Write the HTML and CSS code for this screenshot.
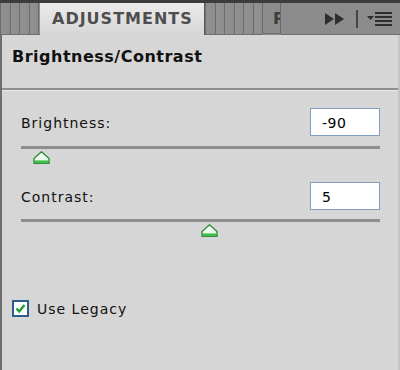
FILE: index.html
```html
<!DOCTYPE html>
<html lang="en">
<head>
    <meta charset="UTF-8">
    <meta name="viewport" content="width=device-width, initial-scale=1.0">
    <title>Adjustments</title>
    <link rel="stylesheet" href="styles.css">
</head>
<body>
    <div class="painel">
        <!-- barra de abas -->
        <div class="abas">
            <div class="grip grip-esq"></div>
            <div class="aba ativa">ADJUSTMENTS</div>
            <div class="grip grip-meio"></div>
            <div class="aba fechada">P</div>
            <div class="acoes">
                <svg class="icone-avancar" width="22" height="12" viewBox="0 0 22 12">
                    <polygon points="1,0 10,6 1,12" fill="#2e2e2e"/>
                    <polygon points="11,0 20,6 11,12" fill="#2e2e2e"/>
                </svg>
                <span class="separador"></span>
                <svg class="icone-menu" width="26" height="16" viewBox="0 0 26 16">
                    <polygon points="0,5 7,5 3.5,9" fill="#2e2e2e"/>
                    <rect x="8" y="1" width="17" height="2" fill="#2e2e2e"/>
                    <rect x="8" y="5" width="17" height="2" fill="#2e2e2e"/>
                    <rect x="8" y="9" width="17" height="2" fill="#2e2e2e"/>
                    <rect x="8" y="13" width="17" height="2" fill="#2e2e2e"/>
                </svg>
            </div>
        </div>

        <div class="conteudo">
            <h1 class="titulo">Brightness/Contrast</h1>
            <div class="divisor"></div>

            <div class="campo">
                <div class="linha">
                    <label for="brilho">Brightness:</label>
                    <input class="valor" id="brilho" type="text" value="-90">
                </div>
                <div class="trilho"></div>
                <div class="cursor-linha">
                    <svg class="cursor" style="margin-left: 12px" width="17" height="13" viewBox="0 0 17 13">
                        <defs>
                            <linearGradient id="g1" x1="0" y1="0" x2="0" y2="1">
                                <stop offset="0" stop-color="#ffffff"/>
                                <stop offset="0.7" stop-color="#e8f8e8"/>
                                <stop offset="1" stop-color="#6fd06f"/>
                            </linearGradient>
                        </defs>
                        <path d="M8.5 0.8 L16 7.5 L16 12.2 L1 12.2 L1 7.5 Z" fill="url(#g1)" stroke="#2f8f3a" stroke-width="1.4" stroke-linejoin="round"/>
                        <rect x="2" y="9.5" width="13" height="2" fill="#3cbf4a"/>
                    </svg>
                </div>
            </div>

            <div class="campo">
                <div class="linha">
                    <label for="contraste">Contrast:</label>
                    <input class="valor" id="contraste" type="text" value="5">
                </div>
                <div class="trilho"></div>
                <div class="cursor-linha">
                    <svg class="cursor" style="margin-left: 180px" width="17" height="13" viewBox="0 0 17 13">
                        <path d="M8.5 0.8 L16 7.5 L16 12.2 L1 12.2 L1 7.5 Z" fill="url(#g1)" stroke="#2f8f3a" stroke-width="1.4" stroke-linejoin="round"/>
                        <rect x="2" y="9.5" width="13" height="2" fill="#3cbf4a"/>
                    </svg>
                </div>
            </div>

            <div class="legado">
                <span class="caixa-check">
                    <svg width="13" height="13" viewBox="0 0 13 13">
                        <path d="M2.5 6.5 L5.2 9.5 L10.5 3" fill="none" stroke="#1f9d2a" stroke-width="2.4"/>
                    </svg>
                </span>
                <span class="texto-check">Use Legacy</span>
            </div>
        </div>
    </div>
</body>
</html>
```

FILE: styles.css
```css
body {
    margin: 0;
    padding: 0;
    background-color: #d6d6d6;
    font-family: "DejaVu Sans", Verdana, sans-serif;
}

.painel {
    width: 400px;
    height: 370px;
    box-sizing: border-box;
    border-left: 2px solid #6e6e6e;
    border-right: 2px solid #c4c4c4;
    background-color: #d6d6d6;
    display: flex;
    flex-direction: column;
}

/* barra de abas */
.abas {
    height: 32px;
    border-top: 3px solid #3c3c3c;
    background-color: #8c8c8c;
    display: flex;
    margin-left: -2px;
    margin-right: -2px;
}

.grip {
    height: 31px;
    background: repeating-linear-gradient(to right, #6c6c6c 0, #6c6c6c 1px, #919191 1px, #8d8d8d 9.6px);
    border-bottom: 1px solid #6e6e6e;
}

.grip-esq {
    width: 40px;
}

.grip-meio {
    width: 57px;
    border-left: 1px solid #5a5a5a;
}

.aba {
    font-weight: bold;
    font-size: 16px;
    line-height: 32px;
    color: #4e4e4e;
    letter-spacing: 1px;
}

.ativa {
    width: 164px;
    padding-left: 12px;
    box-sizing: border-box;
    background: linear-gradient(#ececec, #d6d6d6);
}

.fechada {
    width: 19px;
    box-sizing: border-box;
    padding-left: 10px;
    overflow: hidden;
    white-space: nowrap;
    color: #3e3e3e;
    border-left: 1px solid #6a6a6a;
    border-right: 1px solid #6a6a6a;
    border-bottom: 1px solid #6e6e6e;
    height: 31px;
    letter-spacing: 0;
}

.acoes {
    flex: 1;
    display: flex;
    align-items: center;
    justify-content: flex-end;
    padding-right: 7px;
    border-bottom: 1px solid #6e6e6e;
    height: 31px;
}

.icone-avancar {
    margin-top: 1px;
}

.separador {
    width: 2px;
    height: 18px;
    background-color: #444;
    margin: 0 9px 0 10px;
}

/* conteudo */
.titulo {
    margin: 0;
    padding: 13px 0 0 10px;
    height: 40px;
    font-size: 16px;
    line-height: 18px;
    letter-spacing: 0.5px;
    color: #111;
}

.divisor {
    height: 2px;
    background-color: #8e8e8e;
    border-bottom: 1px solid #ebebeb;
}

.campo {
    padding: 0 18px 0 19px;
}

.linha {
    height: 28px;
    margin-top: 17px;
    display: flex;
    justify-content: space-between;
    align-items: center;
}

.campo + .campo .linha {
    margin-top: 16px;
}

label {
    font-size: 14px;
    letter-spacing: 1px;
    color: #111;
    padding-top: 2px;
}

.valor {
    width: 70px;
    height: 28px;
    box-sizing: border-box;
    border: 1px solid #7f9dc0;
    background: #fff;
    font-family: "DejaVu Sans", Verdana, sans-serif;
    font-size: 14px;
    letter-spacing: 0.5px;
    padding: 2px 0 0 11px;
    margin-right: 0;
    color: #000;
}

.trilho {
    height: 3px;
    margin-top: 10px;
    background-color: #8e8e8e;
}

.campo + .campo .trilho {
    margin-top: 9px;
}

.cursor-linha {
    height: 15px;
    padding-top: 2px;
}

.cursor {
    display: block;
}

.legado {
    margin-top: 61px;
    padding-left: 10px;
    display: flex;
    align-items: center;
}

.caixa-check {
    width: 17px;
    height: 17px;
    box-sizing: border-box;
    border: 2px solid #2d5d8e;
    background: #fff;
    display: flex;
    align-items: center;
    justify-content: center;
}

.texto-check {
    font-size: 14px;
    letter-spacing: 1px;
    color: #111;
    margin-left: 8px;
}
```
